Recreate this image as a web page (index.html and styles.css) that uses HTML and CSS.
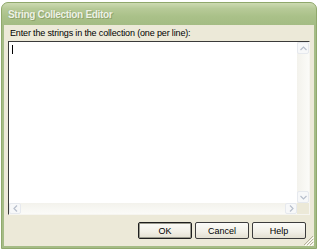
FILE: index.html
```html
<!DOCTYPE html>
<html>
<head>
<meta charset="utf-8">
<link rel="stylesheet" href="styles.css">
</head>
<body>
<div class="window">
  <div class="titlebar"><span class="title">String Collection Editor</span></div>
  <div class="client">
    <div class="label">Enter the strings in the collection (one per line):</div>
    <div class="textbox">
      <div class="editrow">
        <div class="editarea"><span class="caret"></span></div>
        <div class="vscroll">
          <div class="sbtn"><svg width="7" height="5" viewBox="0 0 7 5"><path d="M0.5 4 L3.5 1 L6.5 4" fill="none" stroke="#b7bfcc" stroke-width="1.2"/></svg></div>
          <div class="track"></div>
          <div class="sbtn"><svg width="7" height="5" viewBox="0 0 7 5"><path d="M0.5 1 L3.5 4 L6.5 1" fill="none" stroke="#b7bfcc" stroke-width="1.2"/></svg></div>
        </div>
      </div>
      <div class="hrow">
        <div class="hscroll">
          <div class="sbtn"><svg width="5" height="7" viewBox="0 0 5 7"><path d="M4 0.5 L1 3.5 L4 6.5" fill="none" stroke="#b7bfcc" stroke-width="1.2"/></svg></div>
          <div class="track"></div>
          <div class="sbtn"><svg width="5" height="7" viewBox="0 0 5 7"><path d="M1 0.5 L4 3.5 L1 6.5" fill="none" stroke="#b7bfcc" stroke-width="1.2"/></svg></div>
        </div>
        <div class="corner"></div>
      </div>
    </div>
    <div class="buttons">
      <div class="btn default">OK</div>
      <div class="btn">Cancel</div>
      <div class="btn">Help</div>
    </div>
    <svg class="grip" width="11" height="11" viewBox="0 0 11 11">
      <path d="M10 1 L1 10 M10 4 L4 10 M10 7 L7 10" stroke="#b5b19c" stroke-width="1"/>
      <path d="M11 2 L2 11 M11 5 L5 11 M11 8 L8 11" stroke="#ffffff" stroke-width="1"/>
    </svg>
  </div>
</div>
</body>
</html>
```
FILE: styles.css
```css
html, body {
  margin: 0;
  padding: 0;
  background: #ffffff;
}
body {
  width: 320px;
  height: 252px;
  overflow: hidden;
}
.window {
  margin: 2px 0 0 1px;
  width: 316px;
  height: 247px;
  box-sizing: border-box;
  display: flex;
  flex-direction: column;
  border-radius: 7px 7px 0 0;
  background: #a5bc86;
  border: 1px solid #90a86c;
  overflow: hidden;
}
.titlebar {
  height: 22px;
  flex: none;
  background: linear-gradient(#cddab2 0%, #b7ca98 25%, #aac189 60%, #a4bc84 100%);
  display: flex;
  align-items: center;
  padding-left: 6px;
}
.title {
  font-family: "Liberation Sans", sans-serif;
  font-weight: bold;
  font-size: 10px;
  letter-spacing: -0.3px;
  color: #eef2e6;
  text-shadow: 1px 1px 0 #8ea36c, 0 0 1px #8ea36c;
}
.client {
  flex: 1;
  margin: 0 2px 2px 2px;
  background: #ece9d8;
  display: flex;
  flex-direction: column;
  padding: 0 4px;
  position: relative;
}
.label {
  font-family: "Liberation Sans", sans-serif;
  font-size: 9px;
  letter-spacing: -0.15px;
  color: #000;
  margin-top: 3px;
  height: 11px;
  line-height: 11px;
  padding-left: 2px;
}
.textbox {
  margin-top: 2px;
  height: 174px;
  box-sizing: border-box;
  border-top: 1px solid #3a3a3a;
  border-left: 1px solid #3a3a3a;
  border-right: 1px solid #f6f5f0;
  border-bottom: 1px solid #f6f5f0;
  background: #fff;
  display: flex;
  flex-direction: column;
}
.editrow {
  flex: 1;
  display: flex;
}
.editarea {
  flex: 1;
  padding: 3px 0 0 3px;
}
.caret {
  display: block;
  width: 1px;
  height: 9px;
  background: #000;
}
.vscroll {
  width: 12px;
  display: flex;
  flex-direction: column;
  background: linear-gradient(90deg, #f3f2ec, #fbfbf8);
}
.vscroll .track { flex: 1; }
.hscroll {
  flex: 1;
  height: 11px;
  display: flex;
  background: linear-gradient(#f3f2ec, #fbfbf8);
}
.hscroll .track { flex: 1; }
.hrow {
  display: flex;
}
.corner {
  width: 12px;
  height: 11px;
  background: #ece9d8;
}
.sbtn {
  width: 12px;
  height: 12px;
  box-sizing: border-box;
  border: 1px solid #e6e9ee;
  border-radius: 2px;
  background: #f7f8f9;
  display: flex;
  align-items: center;
  justify-content: center;
}
.hscroll .sbtn { height: 11px; }
.buttons {
  display: flex;
  justify-content: flex-end;
  gap: 2px;
  margin-top: 7px;
  padding-right: 4px;
}
.btn {
  width: 54px;
  height: 17px;
  box-sizing: border-box;
  border: 1px solid #3c3c3c;
  border-radius: 2px;
  background: linear-gradient(#fbfbf8 0%, #f1efe6 60%, #e3e0d2 100%);
  font-family: "Liberation Sans", sans-serif;
  font-size: 9px;
  color: #000;
  display: flex;
  align-items: center;
  justify-content: center;
}
.btn + .btn { margin-left: 1px; }
.btn.default {
  border: 1px solid #1e1e1e;
  box-shadow: inset 0 0 0 1px #9a9a8e;
}
.grip {
  position: absolute;
  right: 0;
  bottom: 0;
}
```
